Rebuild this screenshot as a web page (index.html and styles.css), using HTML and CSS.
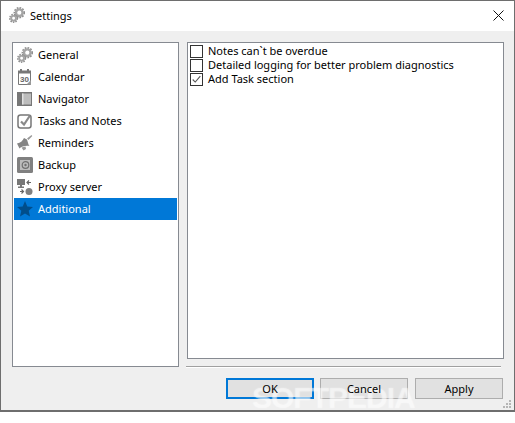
FILE: index.html
```html
<!DOCTYPE html>
<html lang="en">
<head>
  <meta charset="UTF-8" />
  <title>Settings</title>
  <link rel="stylesheet" href="styles.css">
</head>
<body>
  <div class="window">
    <div class="title-bar">
      <svg class="title-icon" viewBox="0 0 16 16"><use href="#gears"/></svg>
      <span class="title-text">Settings</span>
      <svg class="close-btn" viewBox="0 0 11 11"><path d="M.5.5l10 10M10.5.5l-10 10"/></svg>
    </div>

    <svg class="defs" width="0" height="0">
      <defs>
        <g id="gears">
          <circle cx="10.300" cy="5.700" r="3.300" fill="none" stroke="#a5a5a5" stroke-width="2.400"/>
          <circle cx="10.300" cy="5.700" r="5" fill="none" stroke="#8f8f8f" stroke-width="1.500" stroke-dasharray="1.700 1.200"/>
          <circle cx="4.600" cy="11.300" r="2.400" fill="none" stroke="#a5a5a5" stroke-width="1.900"/>
          <circle cx="4.600" cy="11.300" r="3.900" fill="none" stroke="#8f8f8f" stroke-width="1.400" stroke-dasharray="1.500 1.100"/>
        </g>
      </defs>
    </svg>

    <div class="main">
      <ul class="nav-list">
        <li class="nav-item">
          <svg class="nav-icon" viewBox="0 0 16 16"><use href="#gears"/></svg>
          <span class="label">General</span>
        </li>
        <li class="nav-item">
          <svg class="nav-icon" viewBox="0 0 16 16">
            <path d="M1.500 2.500h12v13h-12z" fill="#fff" stroke="#777"/>
            <path d="M1 1.500h13v3H1z" fill="#777"/>
            <path d="M4 0v3M11 0v3" stroke="#777" stroke-width="2"/>
            <text x="3" y="13" class="cal-num">30</text>
            <path d="M9.500 15.500l4.500-4.500v4.500z" fill="#999"/>
          </svg>
          <span class="label">Calendar</span>
        </li>
        <li class="nav-item">
          <svg class="nav-icon" viewBox="0 0 16 16">
            <path d="M0 1h15v14H0z" fill="#777"/>
            <path d="M5 2.500h9v11H5z" fill="#bdbdbd"/>
            <path d="M5 2.500h1.500v11H5z" fill="#e2e2e2"/>
          </svg>
          <span class="label">Navigator</span>
        </li>
        <li class="nav-item">
          <svg class="nav-icon" viewBox="0 0 16 16">
            <rect x="1" y="2" width="13" height="13" rx="2.500" fill="#fff" stroke="#777" stroke-width="1.500"/>
            <path d="M4 8.500l3 3 6-9" fill="none" stroke="#8a8a8a" stroke-width="2.200"/>
          </svg>
          <span class="label">Tasks and Notes</span>
        </li>
        <li class="nav-item">
          <svg class="nav-icon" viewBox="0 0 16 16">
            <path d="M0 8.500c3.500-.5 5.500-2.500 7-5.500l3 1.500 1.500 5 1 1.500c-4.500-.5-8 .5-10 2.500z" fill="#858585"/>
            <path d="M10 3.500l4.500-3.500 .8 1-3.800 4zM4.500 12.500l2 3 2.500-1.500-.5-2.500z" fill="#9a9a9a"/>
          </svg>
          <span class="label">Reminders</span>
        </li>
        <li class="nav-item">
          <svg class="nav-icon" viewBox="0 0 16 16">
            <rect x="0" y="0" width="16" height="16" rx="1.500" fill="#808080"/>
            <rect x="3" y="3" width="10" height="10" fill="#bcbcbc"/>
            <circle cx="8.500" cy="8" r="3.300" fill="none" stroke="#707070" stroke-width="1.200"/>
            <circle cx="8.500" cy="8" r="1.200" fill="#707070"/>
          </svg>
          <span class="label">Backup</span>
        </li>
        <li class="nav-item">
          <svg class="nav-icon" viewBox="0 0 16 16">
            <path d="M0 0h8v6H0zM3 6h2v1.500h2V9H1V7.500h2z" fill="#777"/>
            <circle cx="12" cy="12.500" r="3.500" fill="#808080"/>
            <path d="M14 3.500h-3.500M12 1.500l-2 2 2 2M3 12.500h3.500M4.500 10.500l2 2-2 2" fill="none" stroke="#666" stroke-width="1.200"/>
          </svg>
          <span class="label">Proxy server</span>
        </li>
        <li class="nav-item selected">
          <svg class="nav-icon" viewBox="0 0 16 16">
            <path d="M8 0l2.300 5.400 5.700.5-4.300 3.800 1.300 5.800L8 12.500l-5 3 1.300-5.800L0 5.900l5.700-.5z" fill="#004e8c"/>
          </svg>
          <span class="label">Additional</span>
        </li>
      </ul>

      <div class="options">
        <label class="option"><span class="check"></span><span class="label">Notes can`t be overdue</span></label>
        <label class="option"><span class="check"></span><span class="label">Detailed logging for better problem diagnostics</span></label>
        <label class="option">
          <span class="check"><svg viewBox="0 0 13 13"><path d="M2 6.500l3 3 6-7" fill="none" stroke="#555" stroke-width="1.300"/></svg></span>
          <span class="label">Add Task section</span>
        </label>
      </div>
    </div>

    <div class="footer">
      <div class="separator"></div>
      <div class="buttons">
        <button class="btn btn-default"><span class="btn-text">OK</span></button>
        <button class="btn"><span class="btn-text">Cancel</span></button>
        <button class="btn btn-apply"><span class="btn-text">Apply</span></button>
      </div>
    </div>

    <svg class="grip" viewBox="0 0 8 8">
      <path d="M6 0h2v2H6zM3 3h2v2H3zM6 3h2v2H6zM0 6h2v2H0zM3 6h2v2H3zM6 6h2v2H6z" fill="#b5b5b5"/>
    </svg>
    <span class="watermark">SOFTPEDIA</span>
  </div>
</body>
</html>
```
FILE: styles.css
```css
html, body {
  margin: 0;
  padding: 0;
  background: #fff;
}
.window {
  position: relative;
  box-sizing: border-box;
  width: 515px;
  height: 412px;
  display: flex;
  flex-direction: column;
  background: #efefef;
  border: 1px solid #6e6e6e;
  border-width: 1px 1px 2px 1px;
  font-family: "Noto Sans", "Open Sans", sans-serif;
  font-size: 11px;
  color: #000;
}
.defs {
  position: absolute;
}
.title-bar {
  box-sizing: border-box;
  height: 30px;
  flex: none;
  display: flex;
  align-items: center;
  background: #fff;
  padding: 0 10px 2px 8px;
}
.title-icon {
  width: 16px;
  height: 16px;
  margin-right: 5px;
}
.title-text {
  flex: 1;
}
.close-btn {
  width: 11px;
  height: 11px;
}
.close-btn path {
  stroke: #111;
  stroke-width: 1;
  fill: none;
}
.main {
  flex: 1;
  display: flex;
  gap: 8px;
  padding: 11px 10px 0 11px;
  min-height: 0;
}
.nav-list {
  box-sizing: border-box;
  width: 167px;
  height: 325px;
  margin: 0;
  padding: 1px;
  list-style: none;
  background: #fff;
  border: 1px solid #868a91;
}
.nav-item {
  height: 22px;
  display: flex;
  align-items: center;
  padding-left: 3px;
  gap: 5px;
}
.nav-item.selected {
  background: #0078d7;
  color: #fff;
}
.label {
  margin-bottom: 2px;
}
.nav-icon {
  width: 16px;
  height: 16px;
  flex: none;
}
.cal-num {
  font-family: "Liberation Sans", sans-serif;
  font-size: 8px;
  font-weight: 700;
  fill: #666;
}
.options {
  box-sizing: border-box;
  width: 317px;
  height: 317px;
  padding: 1px 2px;
  background: #fff;
  border: 1px solid #868a91;
}
.option {
  height: 14px;
  display: flex;
  align-items: center;
  gap: 5px;
}
.check {
  box-sizing: border-box;
  width: 13px;
  height: 13px;
  flex: none;
  border: 1px solid #333;
  background: #fff;
}
.check svg {
  display: block;
  width: 11px;
  height: 11px;
}
.footer {
  flex: none;
  padding: 0 10px 11px 185px;
}
.separator {
  height: 1px;
  width: 315px;
  margin-bottom: 10px;
  background: #a0a0a0;
  border-bottom: 1px solid #fff;
}
.buttons {
  display: flex;
  gap: 6px;
  padding-left: 40px;
}
.btn {
  box-sizing: border-box;
  width: 88px;
  height: 21px;
  padding: 0;
  background: #e1e1e1;
  border: 1px solid #adadad;
  font: inherit;
  color: #000;
}
.btn-text {
  position: relative;
  z-index: 1;
}
.btn-default {
  border: 2px solid #0078d7;
}
.btn-apply {
  margin-left: 1px;
}
.grip {
  position: absolute;
  right: 3px;
  bottom: 2px;
  width: 8px;
  height: 8px;
}
.watermark {
  position: absolute;
  left: 251px;
  top: 385px;
  font-family: "Liberation Sans", sans-serif;
  font-size: 30px;
  line-height: 24px;
  font-weight: 700;
  letter-spacing: -1px;
  color: rgba(255, 255, 255, 0.4);
  text-shadow: 0 0 2px rgba(255, 255, 255, 0.4);
  pointer-events: none;
}
```
